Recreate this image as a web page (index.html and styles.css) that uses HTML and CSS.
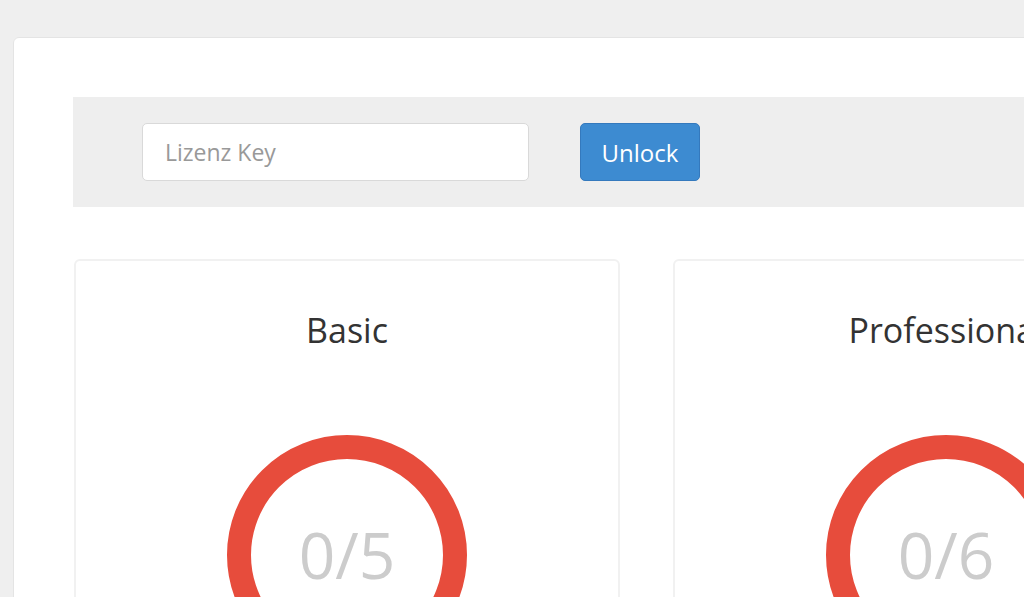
FILE: index.html
```html
<!DOCTYPE html>
<html>
<head>
    <meta charset="UTF-8">
    <meta name="viewport" content="width=device-width, initial-scale=1.0">
    <title>Lizenz</title>
    <link rel="stylesheet" href="styles.css">
</head>
<body>
    <div class="panel">
        <form class="unlock-bar">
            <input type="text" class="key-input" placeholder="Lizenz Key">
            <button type="button" class="unlock-btn">Unlock</button>
        </form>

        <div class="plans">
            <div class="plan">
                <h2>Basic</h2>
                <div class="ring"><span>0/5</span></div>
            </div>
            <div class="plan">
                <h2>Professional</h2>
                <div class="ring"><span>0/6</span></div>
            </div>
        </div>
    </div>
</body>
</html>
```

FILE: styles.css
```css
body {
    font-family: "Open Sans", Arial, sans-serif;
    margin: 0;
    padding: 37px 0 0 13px;
    background: #efefef;
    color: #333;
    overflow: hidden;
    height: 597px;
    box-sizing: border-box;
}

.panel {
    width: 1400px;
    background: #fff;
    border: 1px solid #e4e4e4;
    border-radius: 6px;
    padding: 59px;
    min-height: 700px;
}

.unlock-bar {
    display: flex;
    align-items: center;
    gap: 51px;
    height: 110px;
    padding: 0 69px;
    background: #eee;
    margin: 0;
}

.key-input {
    width: 387px;
    height: 58px;
    box-sizing: border-box;
    border: 1px solid #d9d9d9;
    border-radius: 5px;
    padding: 0 22px;
    font-family: inherit;
    font-size: 23px;
    color: #555;
    background: #fff;
}

.key-input::placeholder {
    color: #999;
}

.unlock-btn {
    width: 120px;
    height: 58px;
    border: 1px solid #3479bd;
    border-radius: 5px;
    background: #3d8bd1;
    color: #fff;
    font-family: inherit;
    font-size: 24px;
    cursor: pointer;
}

.plans {
    display: flex;
    gap: 53px;
    margin: 52px 0 0 1px;
}

.plan {
    width: 546px;
    box-sizing: border-box;
    border: 2px solid #f1f1f1;
    border-radius: 6px;
    display: flex;
    flex-direction: column;
    align-items: center;
    padding-top: 46px;
    height: 500px;
}

.plan h2 {
    margin: 0;
    font-size: 34px;
    font-weight: 400;
    line-height: 46px;
    color: #333;
}

.ring {
    margin-top: 82px;
    width: 240px;
    height: 240px;
    box-sizing: border-box;
    border: 24px solid #e74c3c;
    border-radius: 50%;
    display: flex;
    align-items: center;
    justify-content: center;
}

.ring span {
    font-size: 64px;
    color: #ccc;
    line-height: 1;
}
```
